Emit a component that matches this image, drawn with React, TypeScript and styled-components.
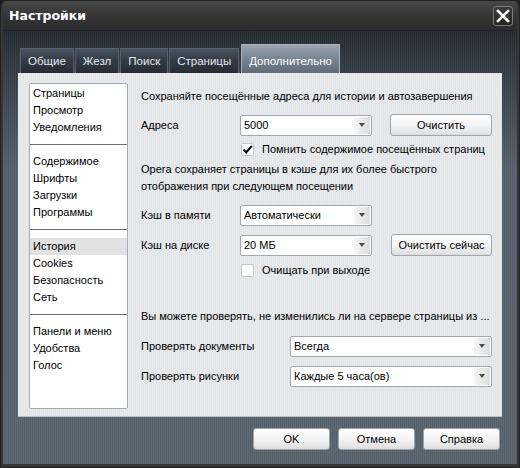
import styled, { createGlobalStyle } from 'styled-components';

const GlobalStyle = createGlobalStyle`
  html, body {
    margin: 0;
    padding: 0;
    background: #1e1e1e;
  }
  body {
    font-family: "Liberation Sans", Arial, sans-serif;
    font-size: 11px;
  }
`;

const sideGroups = [
  ['Страницы', 'Просмотр', 'Уведомления'],
  ['Содержимое', 'Шрифты', 'Загрузки', 'Программы'],
  ['История', 'Cookies', 'Безопасность', 'Сеть'],
  ['Панели и меню', 'Удобства', 'Голос'],
];

const tabs = ['Общие', 'Жезл', 'Поиск', 'Страницы', 'Дополнительно'];

export default function App() {
  return (
    <>
      <GlobalStyle />
      <Window>
        <TitleBar>
          <Title>Настройки</Title>
          <CloseButton>
            <svg width="14" height="14" viewBox="0 0 14 14">
              <path d="M2 2 L12 12 M12 2 L2 12" stroke="#fff" strokeWidth="2.6" strokeLinecap="square" />
            </svg>
          </CloseButton>
        </TitleBar>
        <Body>
          <TabRow>
            {tabs.map((t, i) => (
              <Tab key={t} $active={i === tabs.length - 1}>{t}</Tab>
            ))}
          </TabRow>
          <Panel>
            <SideList>
              {sideGroups.map((group, gi) => (
                <div key={gi}>
                  {gi > 0 && <Separator />}
                  {group.map(item => (
                    <SideItem key={item} $selected={item === 'История'}>{item}</SideItem>
                  ))}
                </div>
              ))}
            </SideList>
            <Content>
              <Heading>Сохраняйте посещённые адреса для истории и автозавершения</Heading>
              <FieldRow $top={9}>
                <Label>Адреса</Label>
                <Combo $width={132}>
                  <ComboText>5000</ComboText>
                  <ComboArrow><Triangle /></ComboArrow>
                </Combo>
                <Button $width={102} $ml={18}>Очистить</Button>
              </FieldRow>
              <CheckRow $top={5}>
                <CheckBox>
                  <svg width="13" height="13" viewBox="0 0 13 13">
                    <path d="M2.5 6.5 L5.2 9.5 L10.8 2.8" stroke="#000" strokeWidth="2" fill="none" />
                  </svg>
                </CheckBox>
                Помнить содержимое посещённых страниц
              </CheckRow>
              <Paragraph>
                Opera сохраняет страницы в кэше для их более быстрого<br />
                отображения при следующем посещении
              </Paragraph>
              <FieldRow $top={9}>
                <Label>Кэш в памяти</Label>
                <Combo $width={132}>
                  <ComboText>Автоматически</ComboText>
                  <ComboArrow><Triangle /></ComboArrow>
                </Combo>
              </FieldRow>
              <FieldRow $top={8}>
                <Label>Кэш на диске</Label>
                <Combo $width={132}>
                  <ComboText>20 МБ</ComboText>
                  <ComboArrow><Triangle /></ComboArrow>
                </Combo>
                <Button $width={101} $ml={19}>Очистить сейчас</Button>
              </FieldRow>
              <CheckRow $top={6}>
                <CheckBox />
                Очищать при выходе
              </CheckRow>
              <Heading $top={30}>Вы можете проверять, не изменились ли на сервере страницы из ...</Heading>
              <FieldRow $top={10}>
                <Label $width={149}>Проверять документы</Label>
                <Combo $width={202}>
                  <ComboText>Всегда</ComboText>
                  <ComboArrow><Triangle /></ComboArrow>
                </Combo>
              </FieldRow>
              <FieldRow $top={8}>
                <Label $width={149}>Проверять рисунки</Label>
                <Combo $width={202}>
                  <ComboText>Каждые 5 часа(ов)</ComboText>
                  <ComboArrow><Triangle /></ComboArrow>
                </Combo>
              </FieldRow>
            </Content>
          </Panel>
          <Footer>
            <Button $width={77}>OK</Button>
            <Button $width={77}>Отмена</Button>
            <Button $width={77}>Справка</Button>
          </Footer>
        </Body>
      </Window>
    </>
  );
}

const Window = styled.div`
  width: 520px;
  height: 468px;
  box-sizing: border-box;
  display: flex;
  flex-direction: column;
  background: #363636;
  border: 1px solid #222;
  border-radius: 7px 7px 0 0;
  padding: 0 2px 3px 2px;
  overflow: hidden;
`;

const TitleBar = styled.div`
  height: 29px;
  flex: none;
  display: flex;
  align-items: center;
  justify-content: space-between;
  padding: 0 4px 0 6px;
  background: linear-gradient(#474747, #333333 60%, #2c2c2c);
`;

const Title = styled.div`
  color: #fff;
  font-family: "DejaVu Sans", Tahoma, sans-serif;
  font-weight: bold;
  font-size: 12.5px;
  margin-top: -1px;
`;

const CloseButton = styled.div`
  width: 20px;
  height: 20px;
  box-sizing: border-box;
  border: 1px solid #7a7a7a;
  border-radius: 3px;
  background: linear-gradient(#3a3a3a, #262626);
  display: flex;
  align-items: center;
  justify-content: center;
  margin-top: 1px;
`;

const Body = styled.div`
  flex: 1;
  display: flex;
  flex-direction: column;
  padding: 13px 15px 0 15px;
  background:
    repeating-linear-gradient(90deg, rgba(255,255,255,0.035) 0 1px, rgba(0,0,0,0.04) 1px 2px),
    linear-gradient(#252b32, #3b454f 60px, #56626e 140px, #58646f);
  border-top: 1px solid #1f2327;
`;

const TabRow = styled.div`
  display: flex;
  align-items: flex-end;
  gap: 1px;
  padding-left: 2px;
  height: 29px;
`;

const Tab = styled.div<{ $active?: boolean }>`
  height: ${p => (p.$active ? 29 : 25)}px;
  box-sizing: border-box;
  padding: 0 7px;
  display: flex;
  align-items: center;
  padding-top: ${p => (p.$active ? 4 : 0)}px;
  font-size: 11.5px;
  color: ${p => (p.$active ? '#fff' : '#e4e8ec')};
  border: 1px solid ${p => (p.$active ? '#a9b3bd' : '#566270')};
  border-bottom: none;
  background: ${p =>
    p.$active
      ? 'linear-gradient(#9aa5b0, #7a8794 45%, #5f6b78)'
      : 'linear-gradient(#4a5561, #333c46 45%, #252c34)'};
  margin-left: ${p => (p.$active ? 1 : 0)}px;
`;

const Panel = styled.div`
  height: 344px;
  box-sizing: border-box;
  display: flex;
  padding: 10px 10px 7px 11px;
  background:
    repeating-linear-gradient(90deg, #e8eaec 0 1px, #e2e4e6 1px 2px);
  border-bottom: 1px solid #b9bec4;
`;

const SideList = styled.div`
  width: 99px;
  flex: none;
  box-sizing: border-box;
  background: #fff;
  border: 1px solid #a3acb6;
  border-radius: 2px;
  padding: 1px 0;
`;

const SideItem = styled.div<{ $selected?: boolean }>`
  height: 17px;
  line-height: 17px;
  padding-left: 3px;
  color: #000;
  white-space: nowrap;
  background: ${p => (p.$selected ? '#e2e2e2' : 'transparent')};
`;

const Separator = styled.div`
  height: 17px;
  display: flex;
  align-items: center;
  &::after {
    content: '';
    flex: 1;
    height: 1px;
    background: #6e6e6e;
  }
`;

const Content = styled.div`
  flex: 1;
  display: flex;
  flex-direction: column;
  padding: 5px 0 0 13px;
  color: #000;
`;

const Heading = styled.div<{ $top?: number }>`
  line-height: 17px;
  margin-top: ${p => p.$top ?? 0}px;
  white-space: nowrap;
`;

const Paragraph = styled.div`
  line-height: 17px;
  margin-top: 4px;
`;

const FieldRow = styled.div<{ $top: number }>`
  display: flex;
  align-items: center;
  height: 22px;
  margin-top: ${p => p.$top}px;
`;

const Label = styled.div<{ $width?: number }>`
  width: ${p => p.$width ?? 99}px;
  flex: none;
`;

const Combo = styled.div<{ $width: number }>`
  width: ${p => p.$width}px;
  height: 21px;
  box-sizing: border-box;
  display: flex;
  background: #fff;
  border: 1px solid #a2a9b2;
  border-radius: 2px;
`;

const ComboText = styled.div`
  flex: 1;
  padding-left: 3px;
  line-height: 19px;
`;

const ComboArrow = styled.div`
  width: 16px;
  margin: 1px;
  background: linear-gradient(90deg, #f6f6f6, #dcdcdc);
  display: flex;
  align-items: center;
  justify-content: center;
`;

const Triangle = styled.div`
  width: 0;
  height: 0;
  border-left: 3.5px solid transparent;
  border-right: 3.5px solid transparent;
  border-top: 4px solid #4a4a4a;
`;

const Button = styled.div<{ $width: number; $ml?: number }>`
  width: ${p => p.$width}px;
  height: 22px;
  box-sizing: border-box;
  margin-left: ${p => p.$ml ?? 0}px;
  display: flex;
  align-items: center;
  justify-content: center;
  border: 1px solid #9ea5ad;
  border-radius: 3px;
  background: linear-gradient(#ffffff, #f4f4f4 50%, #dedede);
  color: #000;
  white-space: nowrap;
`;

const CheckRow = styled.div<{ $top: number }>`
  display: flex;
  align-items: center;
  height: 16px;
  margin-top: ${p => p.$top}px;
  padding-left: 100px;
  gap: 8px;
`;

const CheckBox = styled.div`
  width: 13px;
  height: 13px;
  box-sizing: border-box;
  background: #fff;
  border: 1px solid #c4c8cc;
  border-radius: 2px;
  display: flex;
  align-items: center;
  justify-content: center;
  svg { flex: none; }
`;

const Footer = styled.div`
  flex: 1;
  display: flex;
  justify-content: flex-end;
  align-items: flex-start;
  gap: 8px;
  padding: 11px 2px 0 0;
`;
